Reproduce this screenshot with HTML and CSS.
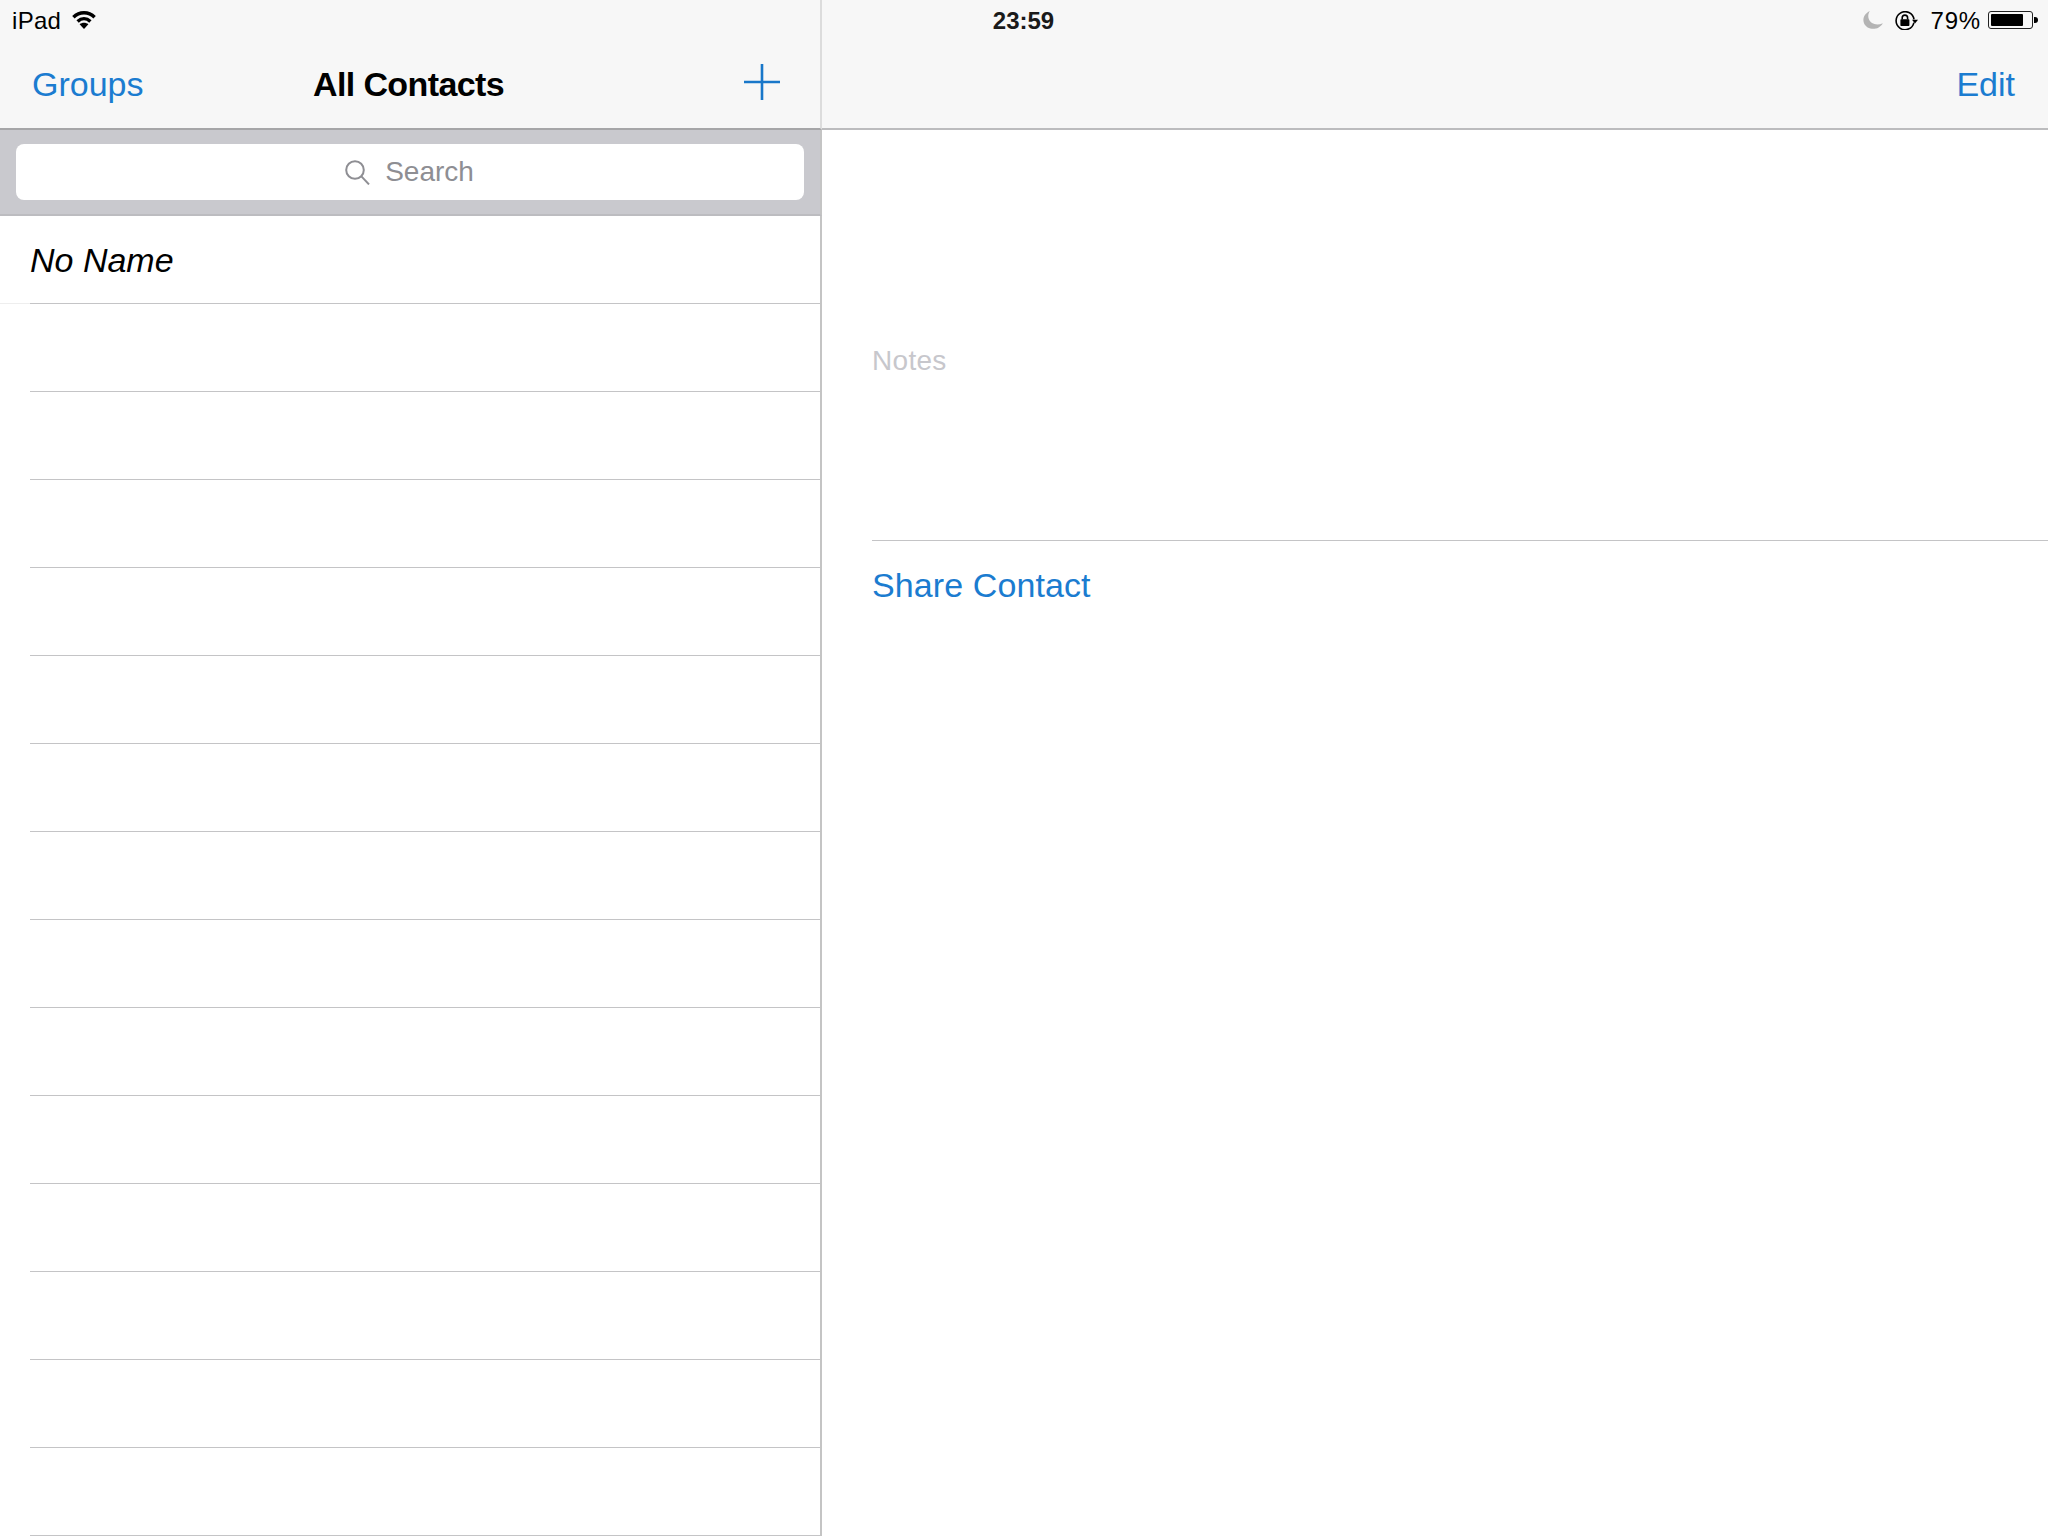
FILE: index.html
```html
<!DOCTYPE html>
<html lang="en">
<head>
<meta charset="utf-8">
<title>Contacts</title>
<link rel="stylesheet" href="styles.css">
</head>
<body>
<div class="app">
  <div class="status">
    <div class="status-left">
      <span class="carrier">iPad</span>
      <svg class="wifi" viewBox="0 0 24 19" aria-hidden="true">
        <path class="wifi-arc" d="M1.4 7.2C7.4 1.2 16.6 1.2 22.6 7.2"/>
        <path class="wifi-arc" d="M5.6 11.4C9.4 7.9 14.6 7.9 18.4 11.4"/>
        <path class="wifi-dot" d="M12 19L7.6 14.2C10.2 12.2 13.8 12.2 16.4 14.2Z"/>
      </svg>
    </div>
    <div class="time">23:59</div>
    <div class="status-right">
      <svg class="moon" viewBox="0 0 20 18" aria-hidden="true">
        <path d="M6.8 0C1.8 2.2 -.9 7.6 1 12.2 3 17.3 10.4 19.6 15.6 16.4 17.6 15.3 19 13.8 19.8 12.2 13.4 15 7.6 12.6 5.8 8 4.8 5.2 5.2 2.4 6.8 0Z"/>
      </svg>
      <svg class="lock" viewBox="0 0 23 19" aria-hidden="true">
        <path class="lock-ring" d="M18.9 11.6A9 9 0 1 1 19 8.4"/>
        <path class="lock-fill" d="M17 8.8H23L20 12.6Z"/>
        <rect class="lock-fill" x="5.4" y="8.2" width="9" height="6.8" rx=".8"/>
        <path class="lock-shackle" d="M7.2 8.6V6.8A2.7 2.7 0 0 1 12.6 6.8V8.6"/>
      </svg>
      <span class="percent">79%</span>
      <div class="battery"><div class="battery-fill"></div></div>
      <div class="battery-nub"></div>
    </div>
  </div>

  <aside class="sidebar">
    <header class="nav nav-left">
      <a class="link">Groups</a>
      <h1 class="title">All Contacts</h1>
      <svg class="plus" viewBox="0 0 36 36" aria-label="Add">
        <path d="M18 0V36M0 18H36"/>
      </svg>
    </header>
    <div class="search-band">
      <div class="search-field">
        <svg class="search-icon" viewBox="0 0 25 25" aria-hidden="true">
          <circle cx="10" cy="10" r="8.8"/>
          <path d="M16.4 16.4L24 24.4"/>
        </svg>
        <span>Search</span>
      </div>
    </div>
    <ul class="list">
      <li class="row row-first"><em>No Name</em></li>
      <li class="row"></li>
      <li class="row"></li>
      <li class="row"></li>
      <li class="row"></li>
      <li class="row"></li>
      <li class="row"></li>
      <li class="row"></li>
      <li class="row"></li>
      <li class="row"></li>
      <li class="row"></li>
      <li class="row"></li>
      <li class="row"></li>
      <li class="row"></li>
      <li class="row"></li>
    </ul>
  </aside>

  <main class="detail">
    <header class="nav nav-right">
      <a class="link">Edit</a>
    </header>
    <div class="detail-body">
      <div class="notes">Notes</div>
      <a class="link share">Share Contact</a>
    </div>
  </main>
</div>
</body>
</html>
```
FILE: styles.css
```css
* { box-sizing: border-box; }

html, body {
  margin: 0;
  padding: 0;
  background: #fff;
}

body {
  font-family: "Liberation Sans", Arial, sans-serif;
  color: #000;
}

.app {
  position: relative;
  display: flex;
  width: 2048px;
  height: 1536px;
  overflow: hidden;
}

/* Status bar sits over the two nav bars */
.status {
  position: absolute;
  top: 0;
  left: 0;
  width: 100%;
  height: 40px;
  padding: 7px 10px 0 12px;
  display: grid;
  grid-template-columns: 1fr auto 1fr;
  font-size: 24px;
  line-height: 28px;
}

.status-left,
.status-right {
  display: flex;
  align-items: center;
  height: 28px;
}

.status-right { justify-content: flex-end; }

.carrier { letter-spacing: .3px; }

.time {
  font-weight: 700;
  height: 28px;
  margin-right: 3px;
  color: #1a1a1a;
}

.wifi {
  width: 24px;
  height: 19px;
  margin-left: 11px;
  margin-top: -4px;
}
.wifi-arc { fill: none; stroke: #000; stroke-width: 3.4; }
.wifi-dot { fill: #000; }

.moon {
  width: 20px;
  height: 18px;
  margin-right: 12px;
  margin-top: -2px;
  fill: #b4b4b4;
}

.lock {
  width: 23px;
  height: 19px;
  margin-right: 13px;
  margin-top: -2px;
}
.lock-ring { fill: none; stroke: #000; stroke-width: 1.6; }
.lock-fill { fill: #000; }
.lock-shackle { fill: none; stroke: #000; stroke-width: 1.6; }

.percent { margin-right: 7px; letter-spacing: .8px; margin-top: -1px; }

.battery {
  width: 45px;
  height: 18px;
  margin-top: -2px;
  padding: 2px;
  border: 1.5px solid #222;
  border-radius: 3px;
}
.battery-fill { width: 32px; height: 100%; background: #000; border-radius: 1px; }
.battery-nub {
  width: 4px;
  height: 6px;
  margin-left: 1px;
  margin-top: -2px;
  background: #000;
  border-radius: 0 3px 3px 0;
}

/* Left column */
.sidebar {
  width: 822px;
  flex: none;
  display: flex;
  flex-direction: column;
}

.nav {
  height: 130px;
  padding-top: 40px;
  flex: none;
  background: #f7f7f7;
  font-size: 34px;
  line-height: 40px;
}

.nav-left {
  display: grid;
  grid-template-columns: 1fr auto 1fr;
  align-items: center;
  padding-left: 32px;
  padding-right: 40px;
  border-bottom: 2px solid #a6a6a8;
  border-right: 2px solid #dcdcdc;
}

.nav-right {
  display: flex;
  justify-content: flex-end;
  align-items: center;
  padding-right: 33px;
  border-bottom: 2px solid #bcbcbe;
}

.link {
  color: #1b7cd0;
  text-decoration: none;
}

.title {
  margin: 0 0 0 5px;
  font-size: 34px;
  line-height: 40px;
  font-weight: 700;
  letter-spacing: -.6px;
}

.plus {
  justify-self: end;
  width: 36px;
  height: 36px;
  margin-bottom: 4px;
}
.plus path { fill: none; stroke: #1877c9; stroke-width: 2.6; }

.search-band {
  height: 86px;
  flex: none;
  padding: 14px 16px 15px;
  background: #c9c9ce;
  border-bottom: 2px solid #bcbcc0;
  border-right: 2px solid #c4c4c4;
}

.search-field {
  height: 56px;
  display: flex;
  align-items: center;
  justify-content: center;
  gap: 15px;
  padding-right: 1px;
  background: #fff;
  border-radius: 8px;
  color: #8e8e93;
  font-size: 28px;
  line-height: 32px;
}

.search-icon { width: 25px; height: 25px; }
.search-icon circle,
.search-icon path { fill: none; stroke: #8e8e93; stroke-width: 2; }

.list {
  flex: 1;
  margin: 0;
  padding: 0;
  list-style: none;
  border-right: 2px solid #c4c4c4;
}

.row {
  height: 88px;
  margin-left: 30px;
  border-bottom: 1px solid #c4c4c6;
  font-size: 34px;
  line-height: 40px;
  padding-top: 24px;
}

.row-first {
  margin-left: 0;
  padding-left: 30px;
  border-bottom: 0;
  background: linear-gradient(#eeeeee, #eeeeee) left bottom / 30px 1px no-repeat,
              linear-gradient(#c4c4c6, #c4c4c6) 30px bottom / 100% 1px no-repeat;
}

/* Right column */
.detail {
  flex: 1;
  display: flex;
  flex-direction: column;
}

.detail-body {
  padding-left: 50px;
  display: flex;
  flex-direction: column;
}

.notes {
  height: 411px;
  padding: 215px 0 0 0;
  font-size: 28px;
  line-height: 32px;
  letter-spacing: .3px;
  color: #c7c7cc;
  border-bottom: 1px solid #c4c4c6;
}

.share {
  margin-top: 24px;
  font-size: 34px;
  line-height: 40px;
  letter-spacing: .1px;
}
```
